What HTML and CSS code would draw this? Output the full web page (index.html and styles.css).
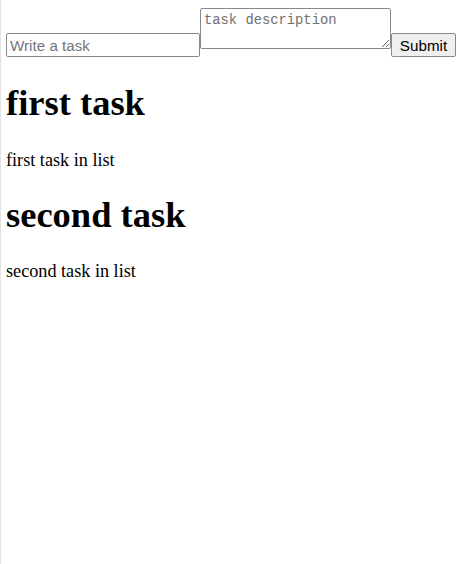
FILE: index.html
```html
<!DOCTYPE html>
<html>
<head>
<meta charset="utf-8">
<link rel="stylesheet" href="styles.css">
</head>
<body class="page">
<form class="task-form">
  <input class="task-input" type="text" placeholder="Write a task">
  <textarea class="task-desc" placeholder="task description"></textarea>
  <button class="task-submit" type="button">Submit</button>
</form>
<div class="task-list">
  <h1 class="task-title">first task</h1>
  <p class="task-text">first task in list</p>
  <h1 class="task-title">second task</h1>
  <p class="task-text">second task in list</p>
</div>
</body>
</html>
```
FILE: styles.css
```css
html {
  background: #ffffff;
}
.page {
  margin: 0;
  padding: 8px 0 0 5px;
  min-height: 564px;
  box-sizing: border-box;
  border-left: 1px solid #e2e2e2;
  font-family: "Liberation Serif", "Times New Roman", serif;
  color: #000;
}
.task-form {
  display: flex;
  align-items: flex-end;
  margin: 0;
}
.task-input {
  box-sizing: border-box;
  width: 194px;
  height: 24px;
  margin: 0;
  padding: 1px 3px;
  border: 1px solid #8a8a8a;
  border-radius: 2px;
  font-family: "Liberation Sans", Arial, sans-serif;
  font-size: 15.2px;
  color: #000;
  background: #fff;
}
.task-input::placeholder {
  color: #757575;
}
.task-desc {
  box-sizing: border-box;
  width: 191px;
  height: 41px;
  margin: 0 0 8px 0;
  padding: 4px 3px 2px;
  border: 1px solid #8a8a8a;
  border-radius: 2px;
  font-family: "Liberation Mono", "DejaVu Sans Mono", monospace;
  font-size: 13.8px;
  background: #fff;
  resize: both;
}
.task-desc::placeholder {
  color: #6f6f6f;
}
.task-submit {
  box-sizing: border-box;
  width: 65px;
  height: 24px;
  margin: 0;
  padding: 1px 6px;
  border: 1px solid #8a8a8a;
  border-radius: 2px;
  background: #efefef;
  font-family: "Liberation Sans", Arial, sans-serif;
  font-size: 15.2px;
  color: #000;
}
.task-list {
  padding-top: 2px;
}
.task-title {
  font-size: 36.5px;
  font-weight: bold;
  margin: 23px 0 25.5px;
  line-height: 42px;
}
.task-text {
  font-size: 18.2px;
  margin: 18px 0;
  line-height: 21px;
}
```
